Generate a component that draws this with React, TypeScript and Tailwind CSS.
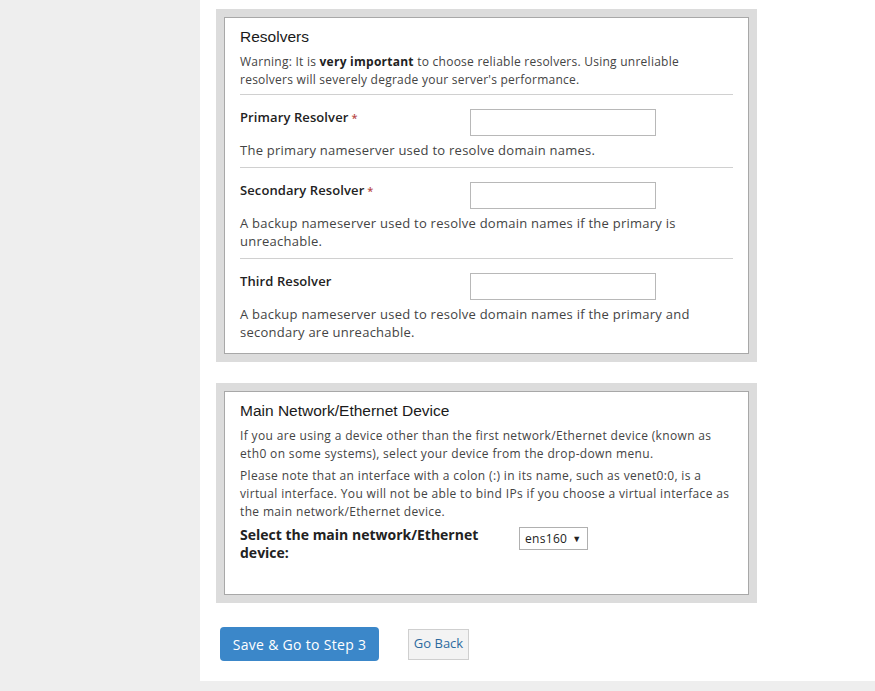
import React from 'react'

const body = "font-['Open_Sans',sans-serif]"

interface RowProps {
    label: string
    required?: boolean
    desc: string
    last?: boolean
}

const ResolverRow: React.FC<RowProps> = ({ label, required, desc, last }) => (
    <div className={`pt-[14px] ${last ? 'pb-[12px]' : 'pb-[8px] border-b border-[#d0d0d0]'}`}>
        <div className="flex items-start">
            <div className="w-[230px] -mt-[1px] text-[13px] leading-[18px] font-semibold tracking-[0.1px] text-[#222]">
                {label}
                {required && <span className="text-[11px] text-[#b94a48]"> *</span>}
            </div>
            <input className="w-[186px] h-[27px] border border-[#b8b8b8] bg-white" />
        </div>
        <p className="mt-[5px] text-[13px] leading-[18px] tracking-[0.25px] text-[#444]">{desc}</p>
    </div>
)

export default function App() {
    return (
        <div className={`flex h-[691px] w-[875px] bg-[#eeeeee] ${body}`}>
            <div className="w-[200px] shrink-0" />
            <div className="w-[675px] h-[681px] bg-white pl-4 pt-[9px]">
                {/* resolvers */}
                <div className="w-[541px] bg-[#dcdcdc] p-2">
                    <div className="bg-white border border-[#a8a8a8] px-[15px] pt-[9px]">
                        <h3 className="font-['Liberation_Sans',sans-serif] text-[15.5px] leading-[20px] text-[#1a1a1a]">Resolvers</h3>
                        <p className="mt-[6px] pb-[5px] border-b border-[#d0d0d0] text-[12px] leading-[18px] tracking-[0.25px] text-[#444]">
                            Warning: It is <b className="text-[#222]">very important</b> to choose reliable resolvers. Using unreliable
                            <br />
                            resolvers will severely degrade your server's performance.
                        </p>
                        <ResolverRow label="Primary Resolver" required desc="The primary nameserver used to resolve domain names." />
                        <ResolverRow
                            label="Secondary Resolver"
                            required
                            desc="A backup nameserver used to resolve domain names if the primary is unreachable."
                        />
                        <ResolverRow
                            label="Third Resolver"
                            last
                            desc="A backup nameserver used to resolve domain names if the primary and secondary are unreachable."
                        />
                    </div>
                </div>

                {/* network device */}
                <div className="mt-[21px] w-[541px] bg-[#dcdcdc] p-2">
                    <div className="bg-white border border-[#a8a8a8] px-[15px] pt-[9px] pb-[32px]">
                        <h3 className="font-['Liberation_Sans',sans-serif] text-[15.5px] leading-[20px] text-[#1a1a1a]">
                            Main Network/Ethernet Device
                        </h3>
                        <p className="mt-[6px] text-[12px] leading-[18px] tracking-[0.35px] text-[#444]">
                            If you are using a device other than the first network/Ethernet device (known as eth0 on some systems), select
                            your device from the drop-down menu.
                        </p>
                        <p className="mt-[4px] text-[12px] leading-[18px] tracking-[0.35px] text-[#444]">
                            Please note that an interface with a colon (:) in its name, such as venet0:0, is a virtual interface. You will
                            not be able to bind IPs if you choose a virtual interface as the main network/Ethernet device.
                        </p>
                        <div className="mt-[5px] flex items-start">
                            <div className="w-[279px] text-[14px] leading-[18px] font-bold text-[#222]">
                                Select the main network/Ethernet device:
                            </div>
                            <div className="mt-[1px] h-[23px] w-[69px] border border-[#b0b0b0] flex items-center pl-[5px] text-[12px] tracking-[0.3px] text-[#222]">
                                ens160 <span className="ml-[5px] text-[9px]">▼</span>
                            </div>
                        </div>
                    </div>
                </div>

                {/* actions */}
                <div className="mt-[24px] ml-[4px] flex items-center">
                    <button className="h-[34px] w-[159px] rounded-[4px] bg-[#3b87c9] text-white text-[14px] tracking-[0.3px]">
                        Save &amp; Go to Step 3
                    </button>
                    <button className="ml-[29px] h-[31px] w-[61px] border border-[#cfcfcf] bg-[#f3f3f3] text-[13px] text-[#2d6a9f]">
                        Go Back
                    </button>
                </div>
            </div>
        </div>
    )
}
